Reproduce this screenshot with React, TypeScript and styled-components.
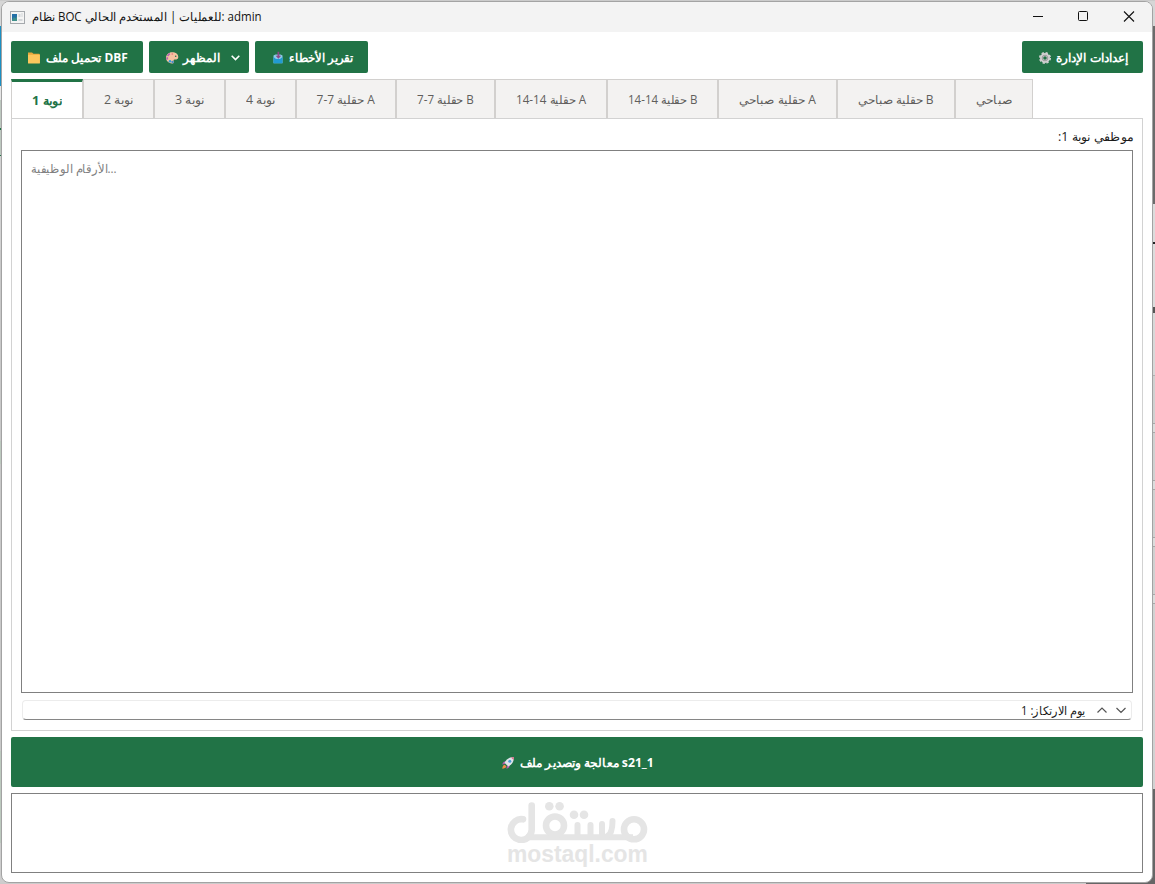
import React, { useLayoutEffect, useRef, useState } from "react";
import styled, { createGlobalStyle } from "styled-components";

const green = "#217346";

const GlobalStyle = createGlobalStyle`
  * { box-sizing: border-box; }
  html, body { margin: 0; padding: 0; }
  body { overflow: hidden; }
`;

const Desktop = styled.div`
  display: grid;
  grid-template-columns: 1px 1152px 2px;
  width: 1155px;
  height: 884px;
  padding: 1px 0;
  background: linear-gradient(to right, #cbcbcb 0 1086px, #666 1086px) bottom / 100% 4px no-repeat, #cbcbcb;
  font-family: "Open Sans", "Noto Sans", sans-serif;
  font-size: 12px;
  color: #1a1a1a;
`;

const LeftEdge = styled.div`
  margin-right: -8px;
  background: linear-gradient(
    #d6d6d6 0 25px, #1b8fc2 25px 85px, #e6e6e6 85px 99px, #bdc8bf 99px 127px,
    #217346 127px 129px, #bdc8bf 129px 154px, #217346 154px 155px, #d2d2d2 155px 249px,
    #c8c8c8 249px 440px, #bcc9be 440px 463px, #c8c8c8 463px 750px, #bcc9be 750px 842px, #cdcdcd 842px
  );
`;

const RightEdge = styled.div`
  margin-left: -8px;
  background: linear-gradient(
    #d6d6d6 0 25px, #6b6b6b 25px 203px, #dcdcdc 203px 241px, #222 241px 243px, #dcdcdc 243px 306px,
    #555 306px 312px, #d8d8d8 312px 374px, #b0b0b0 374px 375px, #d0d0d0 375px 422px, #a8a8a8 422px 423px,
    #dcdcdc 423px 431px, #a8a8a8 431px 432px, #d0d0d0 432px 479px, #a8a8a8 479px 480px, #dcdcdc 480px 488px,
    #a8a8a8 488px 489px, #d0d0d0 489px 536px, #a8a8a8 536px 537px, #dcdcdc 537px 545px, #a8a8a8 545px 546px,
    #d0d0d0 546px 593px, #a8a8a8 593px 594px, #dcdcdc 594px 602px, #a8a8a8 602px 603px, #d2d2d2 603px 788px,
    #666 788px
  );
`;

const Window = styled.main`
  z-index: 1;
  display: flex;
  flex-direction: column;
  height: 882px;
  border: 1px solid #a3a3a3;
  border-radius: 8px;
  background: #fff;
  overflow: hidden;
`;

const TitleBar = styled.header`
  display: flex;
  align-items: center;
  height: 30px;
  flex: none;
  padding: 0 1px 0 8px;
  background: #f3f3f3;
  svg { flex: none; }
`;

const Title = styled.div`
  flex: 1;
  margin-left: 7px;
  color: #111;
`;

const WindowControls = styled.div`
  display: flex;
  svg { width: 45px; height: 30px; }
`;

const Body = styled.div`
  flex: 1;
  display: flex;
  flex-direction: column;
  padding: 9px 9px 9px;
`;

const Toolbar = styled.div`
  display: flex;
  gap: 6px;
  height: 32px;
`;

const ToolButton = styled.button<{ $width: number; $push?: boolean; $indent?: number }>`
  display: flex;
  align-items: center;
  gap: 4px;
  width: ${p => p.$width}px;
  height: 32px;
  margin: 0;
  margin-left: ${p => (p.$push ? "auto" : "0")};
  padding: 1px 0 0 ${p => p.$indent ?? 16}px;
  border: 0;
  border-radius: 2px;
  background: ${green};
  color: #fff;
  font: bold 12px "Open Sans", "Noto Sans", sans-serif;
  svg { flex: none; }
`;

const ButtonChevron = styled.svg`
  margin-left: 7px;
`;

const TabBar = styled.nav`
  display: flex;
  height: 39px;
  margin-top: 6px;
`;

const Tab = styled.div<{ $width: number; $active?: boolean }>`
  display: flex;
  align-items: center;
  justify-content: center;
  width: ${p => p.$width}px;
  padding: ${p => (p.$active ? 1 : 2)}px 1px 0 0;
  border: 1px solid #d2d0ce;
  border-bottom: 0;
  border-top: ${p => (p.$active ? `3px solid ${green}` : "1px solid #d2d0ce")};
  background: ${p => (p.$active ? "#fff" : "#f3f2f1")};
  color: ${p => (p.$active ? green : "#605e5c")};
  font-weight: ${p => (p.$active ? "bold" : "normal")};
`;

const Panel = styled.section`
  display: flex;
  flex-direction: column;
  height: 613px;
  padding: 9px;
  border: 1px solid #d2d2d2;
`;

const PanelLabel = styled.div`
  display: flex;
  justify-content: flex-end;
  align-items: center;
  height: 17px;
  margin-bottom: 5px;
`;

const NumbersBox = styled.div`
  height: 543px;
  padding: 9px;
  border: 1px solid #808080;
  color: #808080;
`;

const SpinBox = styled.div`
  display: flex;
  align-items: center;
  justify-content: flex-end;
  height: 20px;
  margin: 7px 1px 0;
  padding: 2px 1px 0 0;
  border: 1px solid #ececec;
  border-bottom-color: #868686;
  border-radius: 4px;
`;

const SpinArrows = styled.svg`
  margin-left: 9px;
  margin-top: -2px;
`;

const ProcessButton = styled.button`
  display: flex;
  align-items: center;
  justify-content: center;
  gap: 5px;
  height: 50px;
  margin: 6px 0 6px;
  padding: 1px 0 0;
  border: 0;
  border-radius: 2px;
  background: ${green};
  color: #fff;
  font: bold 12px "Open Sans", "Noto Sans", sans-serif;
`;

const LogBox = styled.div`
  display: flex;
  flex-direction: column;
  align-items: center;
  height: 80px;
  padding-top: 7px;
  border: 1px solid #808080;
  color: #e5e5e5;
`;

const BrandName = styled.div`
  height: 22px;
  font: bold 23px/22px "Liberation Sans", sans-serif;
`;

const FitBox = styled.span<{ $width: number }>`
  display: inline-block;
  flex: none;
  width: ${p => p.$width}px;
  height: 18px;
  line-height: 18px;
  white-space: nowrap;
  text-align: left;
`;

const FitText = styled.span`
  display: inline-block;
  line-height: inherit;
  transform-origin: 0 50%;
`;

/* Scales a single line of text horizontally so that it fills its box. */
function Fit({ width, rtl, children }: { width: number; rtl?: boolean; children: string }) {
  const ref = useRef<HTMLSpanElement>(null);
  const [scale, setScale] = useState(1);
  useLayoutEffect(() => {
    if (ref.current) setScale(width / ref.current.offsetWidth);
  }, [width, children]);
  return (
    <FitBox $width={width}>
      <FitText ref={ref} dir={rtl ? "rtl" : "ltr"} style={{ transform: `scaleX(${scale})` }}>
        {children}
      </FitText>
    </FitBox>
  );
}

const AppIcon = () => (
  <svg width="15" height="13" viewBox="0 0 15 13">
    <rect x="0.5" y="0.5" width="14" height="12" fill="#f4f4f4" stroke="#a5a9ad" />
    <rect x="2" y="3" width="5" height="7" fill="#2470a8" />
    <path d="M2 9l2-3 1.5 1.5L7 5v5H2z" fill="#3f8f8a" />
    <path d="M8.500 3h2v3h-2zM11.500 2h1v4h-1zM8.500 8h4v2h-4z" fill="#d3d6d9" />
  </svg>
);

const FolderIcon = () => (
  <svg width="16" height="14" viewBox="0 0 16 14">
    <path d="M2 1.500h4l1.500 1.300H13a.8.8 0 0 1 .8.8V12H2z" fill="#e9a93c" />
    <path d="M2 3.800h11.900V12a.6.6 0 0 1-.6.600H2.600A.6.6 0 0 1 2 12z" fill="#fbc75d" />
  </svg>
);

const PaletteIcon = () => (
  <svg width="14" height="14" viewBox="0 0 14 14">
    <path d="M7 1.200c3.800 0 6.300 2.100 6.300 4.700 0 2.300-1.700 2.700-3.500 2.600-1.600 0-1.300 1.300-1 2.300.3 1.300-.7 1.900-2 1.700C3.300 12 1 9.600 1 6.700 1 3.700 3.600 1.200 7 1.200z" fill="#f6c3a0" />
    <path d="M4.800 2.500L2.500 5M2.200 6.300v2.200" stroke="#b765b5" strokeWidth="1.800" fill="none" />
    <circle cx="5" cy="10.300" r="1.300" fill="#3b9fd8" />
    <circle cx="7.600" cy="11" r="1.200" fill="#4e8cc7" />
    <circle cx="7.300" cy="3" r=".9" fill="#e98a86" />
    <circle cx="10.700" cy="5.200" r=".8" fill="#217346" />
  </svg>
);

const InboxIcon = () => (
  <svg width="14" height="14" viewBox="0 0 14 14">
    <path d="M2.500 4.500l2-1h5l2 1v7.800H2.500z" fill="#8ecbe8" />
    <path d="M2.500 6l2.500 2h4l2.500-2v5.700a.6.6 0 0 1-.6.600H3.100a.6.6 0 0 1-.6-.6z" fill="#219bd3" />
    <path d="M6.500.8h1.800v4h1.900L7.400 7.800 4.600 4.800h1.900z" fill="#8d4a86" />
  </svg>
);

const GearIcon = () => (
  <svg width="14" height="14" viewBox="0 0 14 14">
    <circle cx="7" cy="7" r="3.400" fill="none" stroke="#cfcfcf" strokeWidth="3.200" />
    <circle cx="7" cy="7" r="5.200" fill="none" stroke="#cfcfcf" strokeWidth="1.700" strokeDasharray="2.300 1.784" />
    <circle cx="7" cy="7" r="2.800" fill="none" stroke="#9a9a9a" strokeWidth="1" />
  </svg>
);

const RocketIcon = () => (
  <svg width="14" height="14" viewBox="0 0 14 14">
    <path d="M4.800 5L2.500 6 1 8.500l3-.4zM9 9l-1 2.500L5.500 13l.4-3z" fill="#b05aa9" />
    <path d="M3.700 8.700C1.800 9 1.500 10.800 1.300 12.700c1.900-.2 3.700-.5 4-2.400z" fill="#f08a4b" />
    <path d="M12.800 1.200c.3 4-1.600 7.200-5.500 9.300L3.500 6.700C5.600 2.800 8.800.9 12.800 1.200z" fill="#dfe3ea" />
    <path d="M12.800 1.200c.1 1 0 2-.2 2.800L10 1.400c.8-.2 1.800-.3 2.800-.2z" fill="#d86a86" />
    <circle cx="8.800" cy="5.200" r="1.500" fill="#4a9cd6" />
  </svg>
);

const Logo = () => (
  <svg width="142" height="42" viewBox="0 0 142 42" fill="none" stroke="#e5e5e5" strokeWidth="6.600" strokeLinecap="round">
    <path d="M17 18.300A10.400 10.400 0 1 0 25.700 28.500V4.500" />
    <path d="M20 36.300H127" strokeWidth="6" strokeLinecap="butt" />
    <circle cx="49" cy="24.500" r="9" />
    <circle cx="128" cy="28.300" r="10" />
    <path d="M71.500 24v11M84.500 24v11M96 23v12M106.500 20c0 8-1 13-5 15" strokeWidth="6" />
    <g fill="#e5e5e5" stroke="none">
      <circle cx="43.300" cy="5.300" r="4.300" />
      <circle cx="53.600" cy="5.300" r="4.300" />
      <circle cx="68" cy="13.700" r="4.300" />
      <circle cx="78" cy="13.700" r="4.300" />
    </g>
  </svg>
);

const tabs: { label: string; width: number; text: number }[] = [
  { label: "نوبة 1", width: 72, text: 30 },
  { label: "نوبة 2", width: 71, text: 29 },
  { label: "نوبة 3", width: 71, text: 29 },
  { label: "نوبة 4", width: 71, text: 29 },
  { label: "حقلية 7-7 A", width: 100, text: 58 },
  { label: "حقلية 7-7 B", width: 99, text: 57 },
  { label: "حقلية 14-14 A", width: 112, text: 70 },
  { label: "حقلية 14-14 B", width: 111, text: 69 },
  { label: "حقلية صباحي A", width: 119, text: 77 },
  { label: "حقلية صباحي B", width: 118, text: 76 },
  { label: "صباحي", width: 78, text: 36 },
];

export default function App() {
  return (
    <>
      <GlobalStyle />
      <Desktop>
        <LeftEdge />
        <Window>
          <TitleBar>
            <AppIcon />
            <Title>
              <Fit width={230}>نظام BOC للعمليات | المستخدم الحالي: admin</Fit>
            </Title>
            <WindowControls>
              <svg viewBox="0 0 45 30" stroke="#111" fill="none"><path d="M17 14.500h10" /></svg>
              <svg viewBox="0 0 45 30" stroke="#111" fill="none"><rect x="17.500" y="9.500" width="9" height="9" rx="1" /></svg>
              <svg viewBox="0 0 45 30" stroke="#111" fill="none" strokeWidth="1.100"><path d="M18 9.500l10 10M28 9.500l-10 10" /></svg>
            </WindowControls>
          </TitleBar>
          <Body>
            <Toolbar>
              <ToolButton $width={132} $indent={15}>
                <FolderIcon />
                <Fit width={82}>تحميل ملف DBF</Fit>
              </ToolButton>
              <ToolButton $width={100}>
                <PaletteIcon />
                <Fit width={37}>المظهر</Fit>
                <ButtonChevron width="9" height="6" viewBox="0 0 9 6" fill="none" stroke="#fff" strokeWidth="1.600">
                  <path d="M.7.8l3.800 3.800L8.300.8" />
                </ButtonChevron>
              </ToolButton>
              <ToolButton $width={113}>
                <InboxIcon />
                <Fit width={64}>تقرير الأخطاء</Fit>
              </ToolButton>
              <ToolButton $width={121} $push>
                <GearIcon />
                <Fit width={72}>إعدادات الإدارة</Fit>
              </ToolButton>
            </Toolbar>
            <TabBar>
              {tabs.map((tab, i) => (
                <Tab key={tab.label} $width={tab.width} $active={i === 0}>
                  <Fit width={tab.text}>{tab.label}</Fit>
                </Tab>
              ))}
            </TabBar>
            <Panel>
              <PanelLabel>
                <Fit width={75} rtl>موظفي نوبة 1:</Fit>
              </PanelLabel>
              <NumbersBox>
                <Fit width={86}>الأرقام الوظيفية...</Fit>
              </NumbersBox>
              <SpinBox>
                <Fit width={64} rtl>يوم الارتكاز: 1</Fit>
                <SpinArrows width="36" height="8" viewBox="0 0 36 8" fill="none" stroke="#555" strokeWidth="1.200">
                  <path d="M3.500 6.500L8 2l4.500 4.500M22.500 2L27 6.500 31.500 2" />
                </SpinArrows>
              </SpinBox>
            </Panel>
            <ProcessButton>
              <RocketIcon />
              <Fit width={134}>معالجة وتصدير ملف s21_1</Fit>
            </ProcessButton>
            <LogBox>
              <Logo />
              <BrandName>
                <Fit width={141}>mostaql.com</Fit>
              </BrandName>
            </LogBox>
          </Body>
        </Window>
        <RightEdge />
      </Desktop>
    </>
  );
}
